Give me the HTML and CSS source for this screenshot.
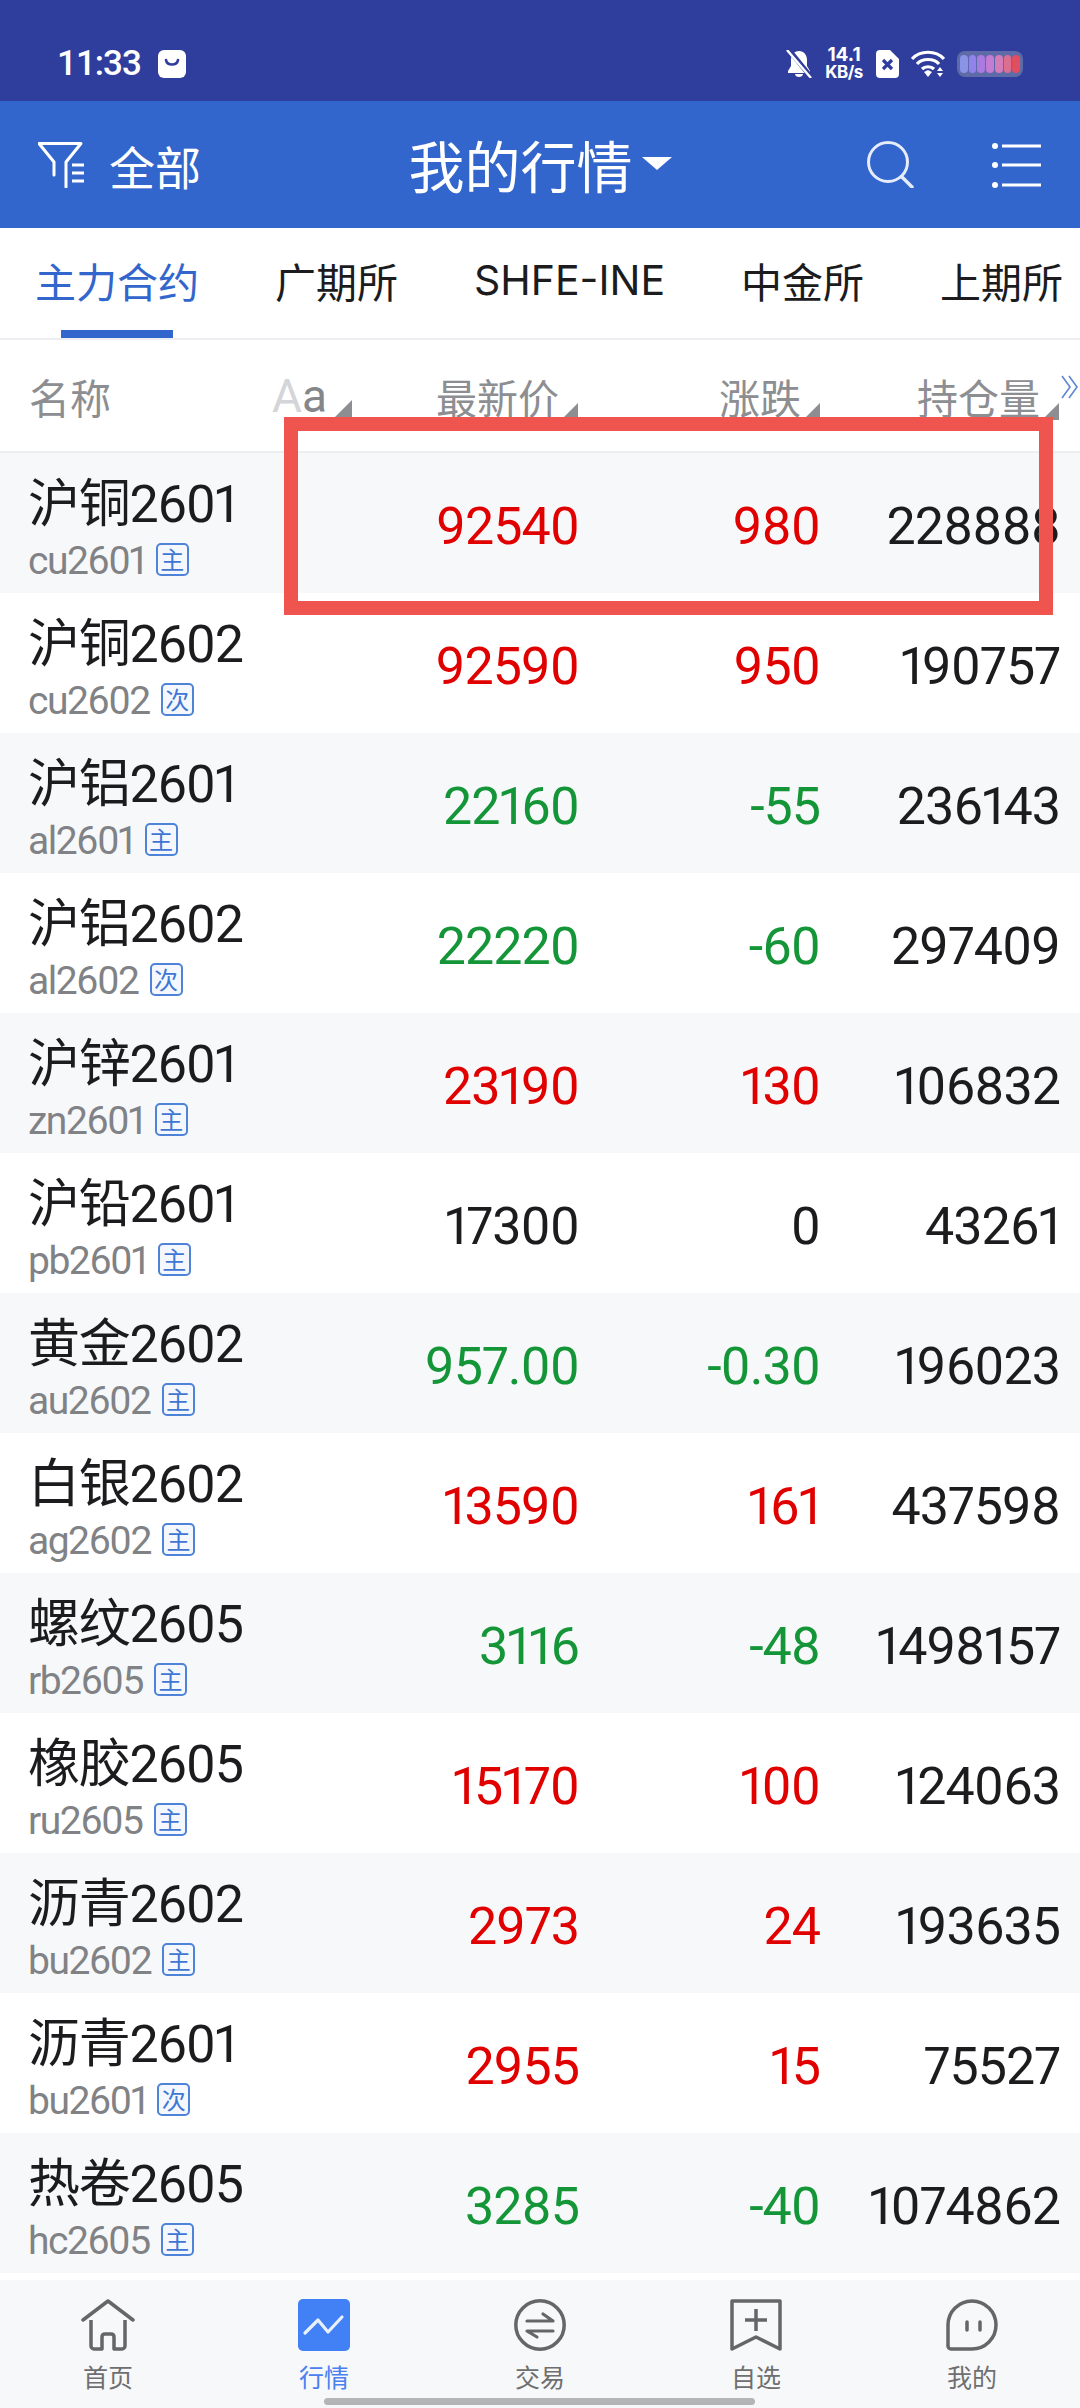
FILE: index.html
```html
<!DOCTYPE html>
<html lang="zh-CN">
<head>
<meta charset="utf-8">
<title>我的行情</title>
<link rel="stylesheet" href="styles.css">
</head>
<body>
<div class="phone">
  <div class="status">
    <div class="status-left">
      <span class="clock">11:33</span>
      <svg class="app-badge" width="28" height="28" viewBox="0 0 28 28"><rect width="28" height="28" rx="6" fill="#fff"/><path d="M8 10c1 6 11 6 12 0" fill="none" stroke="#2f3d9c" stroke-width="2.600" stroke-linecap="round"/></svg>
    </div>
    <div class="status-right">
      <svg width="26" height="28" viewBox="0 0 26 28"><path d="M13 1c5 0 8 4 8 9v6l3 5v2H2v-2l3-5v-6c0-5 3-9 8-9zM9 24h8c0 2-2 3-4 3s-4-1-4-3z" fill="#fff"/><path d="M3 0l22 27" stroke="#2f3d9c" stroke-width="5"/><path d="M1 0l24 28" stroke="#fff" stroke-width="2.400"/></svg>
      <div class="speed"><span class="speed-a">14.1</span><span class="speed-b">KB/s</span></div>
      <svg width="23" height="28" viewBox="0 0 23 28"><path d="M4 0h10l9 9v15a4 4 0 0 1-4 4H4a4 4 0 0 1-4-4V4a4 4 0 0 1 4-4z" fill="#fff"/><path d="M7 10l9 9M16 10l-9 9" stroke="#2f3d9c" stroke-width="3.200"/></svg>
      <svg width="34" height="28" viewBox="0 0 34 28"><g fill="none" stroke="#fff" stroke-width="3.200"><path d="M1 9c8-9 24-9 32 0"/><path d="M6 14c5-6 17-6 22 0"/><path d="M11 19c3-3 9-3 12 0"/></g><path d="M13 22l4-2 4 2-4 5z" fill="#fff"/><path d="M26 21l3-4 3 4zM26 23h6l-3 4z" fill="#fff"/></svg>
      <div class="battery"><i class="cell c1"></i><i class="cell c2"></i><i class="cell c3"></i><i class="cell c4"></i><i class="cell c5"></i><i class="cell c6"></i><i class="cell c7"></i></div>
    </div>
  </div>

  <header class="nav">
    <div class="nav-left">
      <svg width="48" height="46" viewBox="0 0 48 46"><path d="M16 33V20L1 1.500h42L28 20v25" fill="none" stroke="#fff" stroke-width="3" stroke-linejoin="round" stroke-linecap="round"/><path d="M34 23h12M34 31h12M34 39h12" stroke="#fff" stroke-width="3"/></svg>
      <span class="nav-all">全部</span>
    </div>
    <div class="nav-title"><span>我的行情</span><i class="caret"></i></div>
    <div class="nav-right">
      <svg width="47" height="47" viewBox="0 0 47 47"><circle cx="21" cy="21" r="19.500" fill="none" stroke="#e6ecfa" stroke-width="3"/><path d="M35 36l10 10" stroke="#e6ecfa" stroke-width="3.400" stroke-linecap="round"/></svg>
      <svg width="50" height="46" viewBox="0 0 50 46"><circle cx="3" cy="4" r="3" fill="#fff"/><circle cx="3" cy="23" r="3" fill="#fff"/><circle cx="3" cy="43" r="3" fill="#fff"/><path d="M10 4h39M10 23h39M10 43h39" stroke="#fff" stroke-width="3"/></svg>
    </div>
  </header>

  <nav class="tabs">
    <div class="tab tab-on">主力合约</div>
    <div class="tab">广期所</div>
    <div class="tab">SHFE-INE</div>
    <div class="tab">中金所</div>
    <div class="tab">上期所</div>
  </nav>

  <div class="table">
    <div class="head">
      <div class="h-name">名称</div>
      <div class="h-col h-aa"><span class="aa-a">A</span><span class="aa-b">a</span><i class="sort"></i></div>
      <div class="h-col">最新价<i class="sort"></i></div>
      <div class="h-col">涨跌<i class="sort"></i></div>
      <div class="h-col">持仓量<i class="sort"></i></div>
      <svg class="more" width="20" height="24" viewBox="0 0 20 24"><path d="M2 1l8 11-8 11M9 1l8 11-8 11" fill="none" stroke="#5d86d4" stroke-width="1.600"/></svg>
    </div>

    <div class="row alt"><div class="name"><div class="cn">沪铜2601</div><div class="code">cu2601<b class="tag">主</b></div></div><div class="num up">92540</div><div class="num up">980</div><div class="num">228888</div></div>
    <div class="row"><div class="name"><div class="cn">沪铜2602</div><div class="code">cu2602<b class="tag">次</b></div></div><div class="num up">92590</div><div class="num up">950</div><div class="num">190757</div></div>
    <div class="row alt"><div class="name"><div class="cn">沪铝2601</div><div class="code">al2601<b class="tag">主</b></div></div><div class="num down">22160</div><div class="num down">-55</div><div class="num">236143</div></div>
    <div class="row"><div class="name"><div class="cn">沪铝2602</div><div class="code">al2602<b class="tag">次</b></div></div><div class="num down">22220</div><div class="num down">-60</div><div class="num">297409</div></div>
    <div class="row alt"><div class="name"><div class="cn">沪锌2601</div><div class="code">zn2601<b class="tag">主</b></div></div><div class="num up">23190</div><div class="num up">130</div><div class="num">106832</div></div>
    <div class="row"><div class="name"><div class="cn">沪铅2601</div><div class="code">pb2601<b class="tag">主</b></div></div><div class="num">17300</div><div class="num">0</div><div class="num">43261</div></div>
    <div class="row alt"><div class="name"><div class="cn">黄金2602</div><div class="code">au2602<b class="tag">主</b></div></div><div class="num down">957.00</div><div class="num down">-0.30</div><div class="num">196023</div></div>
    <div class="row"><div class="name"><div class="cn">白银2602</div><div class="code">ag2602<b class="tag">主</b></div></div><div class="num up">13590</div><div class="num up">161</div><div class="num">437598</div></div>
    <div class="row alt"><div class="name"><div class="cn">螺纹2605</div><div class="code">rb2605<b class="tag">主</b></div></div><div class="num down">3116</div><div class="num down">-48</div><div class="num">1498157</div></div>
    <div class="row"><div class="name"><div class="cn">橡胶2605</div><div class="code">ru2605<b class="tag">主</b></div></div><div class="num up">15170</div><div class="num up">100</div><div class="num">124063</div></div>
    <div class="row alt"><div class="name"><div class="cn">沥青2602</div><div class="code">bu2602<b class="tag">主</b></div></div><div class="num up">2973</div><div class="num up">24</div><div class="num">193635</div></div>
    <div class="row"><div class="name"><div class="cn">沥青2601</div><div class="code">bu2601<b class="tag">次</b></div></div><div class="num up">2955</div><div class="num up">15</div><div class="num">75527</div></div>
    <div class="row alt"><div class="name"><div class="cn">热卷2605</div><div class="code">hc2605<b class="tag">主</b></div></div><div class="num down">3285</div><div class="num down">-40</div><div class="num">1074862</div></div>
  </div>

  <footer class="bar">
    <div class="bar-item">
      <svg width="54" height="52" viewBox="0 0 54 52"><path d="M2 21L27 2l25 19" fill="none" stroke="#666" stroke-width="3.500" stroke-linecap="round" stroke-linejoin="round"/><path d="M10 21v26a3 3 0 0 0 3 3h8V38q0-3 3-3h6q3 0 3 3v12h8a3 3 0 0 0 3-3V21" fill="none" stroke="#666" stroke-width="3.500" stroke-linejoin="round"/></svg>
      <span>首页</span>
    </div>
    <div class="bar-item bar-on">
      <svg width="52" height="52" viewBox="0 0 52 52"><rect width="52" height="52" rx="5" fill="#4280f5"/><path d="M7 34l13-13 10 12 14-15" fill="none" stroke="#e8effd" stroke-width="3.200" stroke-linecap="round" stroke-linejoin="round"/></svg>
      <span>行情</span>
    </div>
    <div class="bar-item">
      <svg width="52" height="52" viewBox="0 0 52 52"><circle cx="26" cy="26" r="24.200" fill="none" stroke="#666" stroke-width="3.500"/><path d="M13 22h26l-10-7M39 32H13l10 6" fill="none" stroke="#666" stroke-width="3.200" stroke-linecap="round" stroke-linejoin="round"/></svg>
      <span>交易</span>
    </div>
    <div class="bar-item">
      <svg width="52" height="52" viewBox="0 0 52 52"><path d="M2 2h48v48L26 38 2 50z" fill="none" stroke="#666" stroke-width="3.500" stroke-linejoin="round"/><path d="M26 10v22M15 21h22" stroke="#666" stroke-width="3.500"/></svg>
      <span>自选</span>
    </div>
    <div class="bar-item">
      <svg width="52" height="52" viewBox="0 0 52 52"><path d="M2 26a24 24 0 1 1 24 24H5a3 3 0 0 1-3-3z" fill="none" stroke="#666" stroke-width="3.500" stroke-linejoin="round"/><path d="M21 23v8M34 23v8" stroke="#666" stroke-width="3.500" stroke-linecap="round"/></svg>
      <span>我的</span>
    </div>
    <div class="handle"></div>
  </footer>

  <div class="highlight"></div>
</div>
</body>
</html>
```

FILE: styles.css
```css
* { box-sizing: border-box; }
html, body { margin: 0; padding: 0; background: #fff; }
body { font-family: Roboto, "Noto Sans CJK SC", sans-serif; }

.phone {
  position: relative;
  width: 1080px;
  height: 2408px;
  overflow: hidden;
  display: flex;
  flex-direction: column;
  background: #fff;
}

/* status bar */
.status {
  height: 101px;
  background: #2f3d9c;
  color: #fff;
  display: flex;
  align-items: center;
  justify-content: space-between;
  padding: 26px 57px 0 57px;
}
.status-left { display: flex; align-items: center; gap: 17px; }
.clock { font: 500 35px Roboto, sans-serif; letter-spacing: -1px; }
.status-right { display: flex; align-items: center; gap: 12px; }
.speed {
  display: flex;
  flex-direction: column;
  align-items: center;
  font-family: Inter, sans-serif;
  font-weight: 700;
  width: 40px;
  white-space: nowrap;
}
.speed-a { font-size: 19px; line-height: 18px; }
.speed-b { font-size: 17px; line-height: 17px; letter-spacing: -0.5px; }
.battery {
  width: 66px;
  height: 26px;
  border-radius: 8px;
  background: #5f6aa8;
  display: flex;
  gap: 1px;
  padding: 4px 3px;
}
.cell { flex: 1; border-radius: 4px; }
.c1 { background: #8b93e6; }
.c2 { background: #9283ec; }
.c3 { background: #a97ae0; }
.c4 { background: #c47bd2; }
.c5 { background: #d47cb8; }
.c6 { background: #dd6f8e; }
.c7 { background: #e04e60; }

/* nav bar */
.nav {
  height: 127px;
  background: #3366cc;
  color: #fff;
  display: grid;
  grid-template-columns: 1fr auto 1fr;
  align-items: center;
  padding: 0 38px 0 38px;
}
.nav-left { display: flex; align-items: center; gap: 23px; }
.nav-all { font: 400 46px "Noto Sans CJK SC", sans-serif; }
.nav-title {
  display: flex;
  align-items: center;
  gap: 9px;
  font: 400 56px "Noto Sans CJK SC", sans-serif;
  padding-bottom: 2px;
}
.caret {
  width: 0;
  height: 0;
  border-left: 15px solid transparent;
  border-right: 15px solid transparent;
  border-top: 13px solid #fff;
}
.nav-right { display: flex; justify-content: flex-end; align-items: center; gap: 78px; }

/* tabs */
.tabs {
  height: 112px;
  display: flex;
  align-items: center;
  padding: 0 0 6px 35px;
  border-bottom: 2px solid #eceef1;
  gap: 76px;
  font: 400 41px Inter, "Noto Sans CJK SC", sans-serif;
  color: #1c1c1e;
  white-space: nowrap;
}
.tab { position: relative; height: 100%; display: flex; align-items: center; }
.tab-on { color: #3366cc; }
.tab-on::after {
  content: "";
  position: absolute;
  left: 26px;
  right: 26px;
  bottom: -6px;
  height: 8px;
  background: #3366cc;
}

/* table */
.head {
  position: relative;
  height: 113px;
  display: grid;
  grid-template-columns: 242px 165px 283px 198px 1fr;
  align-items: center;
  border-bottom: 2px solid #eceef1;
  color: #8d8e92;
  font: 400 41px "Noto Sans CJK SC", sans-serif;
  padding: 1px 0 1px 29px;
}
.h-col { display: flex; align-items: flex-end; white-space: nowrap; }
.h-aa { font-family: Roboto, sans-serif; font-size: 46px; line-height: 58px; margin-left: 1px; }
.aa-a { color: #d4d5d8; }
.aa-b { color: #85868a; }
.sort {
  width: 0;
  height: 0;
  margin: 0 0 6px 2px;
  border-left: 17px solid transparent;
  border-bottom: 17px solid #8d8e92;
}
.h-aa .sort { margin: 0 0 8px 8px; }
.more { position: absolute; right: 0; top: 35px; }

.row {
  height: 140px;
  display: grid;
  grid-template-columns: 230px 349px 241px 240px;
  align-items: center;
  padding-top: 6px;
}
.alt { background: #f7f8fa; }
.name { padding-left: 28px; white-space: nowrap; margin-top: 4px; }
.cn {
  font: 400 52px/58px Roboto, "Noto Sans CJK SC", sans-serif;
  font-variant-numeric: proportional-nums;
  letter-spacing: -1.300px;
  color: #1c1c1e;
  margin-top: 4px;
}
.code {
  display: flex;
  align-items: center;
  font: 400 39px/46px Roboto, sans-serif;
  font-variant-numeric: proportional-nums;
  letter-spacing: -1.500px;
  color: #808285;
  margin-top: 4px;
}
.tag {
  width: 33px;
  height: 33px;
  margin: -4px 0 0 11px;
  border: 2px solid #4f83d8;
  border-radius: 5px;
  background: #f4f8fe;
  color: #3f76d4;
  font: 400 24px/28px "Noto Sans CJK SC", sans-serif;
  letter-spacing: 0;
  text-align: center;
}
.num {
  text-align: right;
  font: 400 52px Roboto, sans-serif;
  font-variant-numeric: proportional-nums;
  letter-spacing: -1px;
  color: #1c1c1e;
  white-space: nowrap;
}
.up { color: #e10000; }
.down { color: #149638; }

/* bottom bar */
.bar {
  position: relative;
  margin-top: 7px;
  flex: 1;
  background: #f7f8fa;
  display: flex;
  padding: 19px 0 0 0;
}
.bar-item {
  flex: none;
  width: 216px;
  display: flex;
  flex-direction: column;
  align-items: center;
  font: 400 25px/30px "Noto Sans CJK SC", sans-serif;
  color: #6f6f6f;
  gap: 10px;
}
.bar-on { color: #4a80f0; }
.handle {
  position: absolute;
  left: 324px;
  bottom: 3px;
  width: 431px;
  height: 7px;
  border-radius: 4px;
  background: #b5b5b7;
}

/* review marker drawn over the first row */
.highlight {
  position: absolute;
  left: 284px;
  top: 417px;
  width: 769px;
  height: 198px;
  border: 14px solid #f0544f;
}
```
